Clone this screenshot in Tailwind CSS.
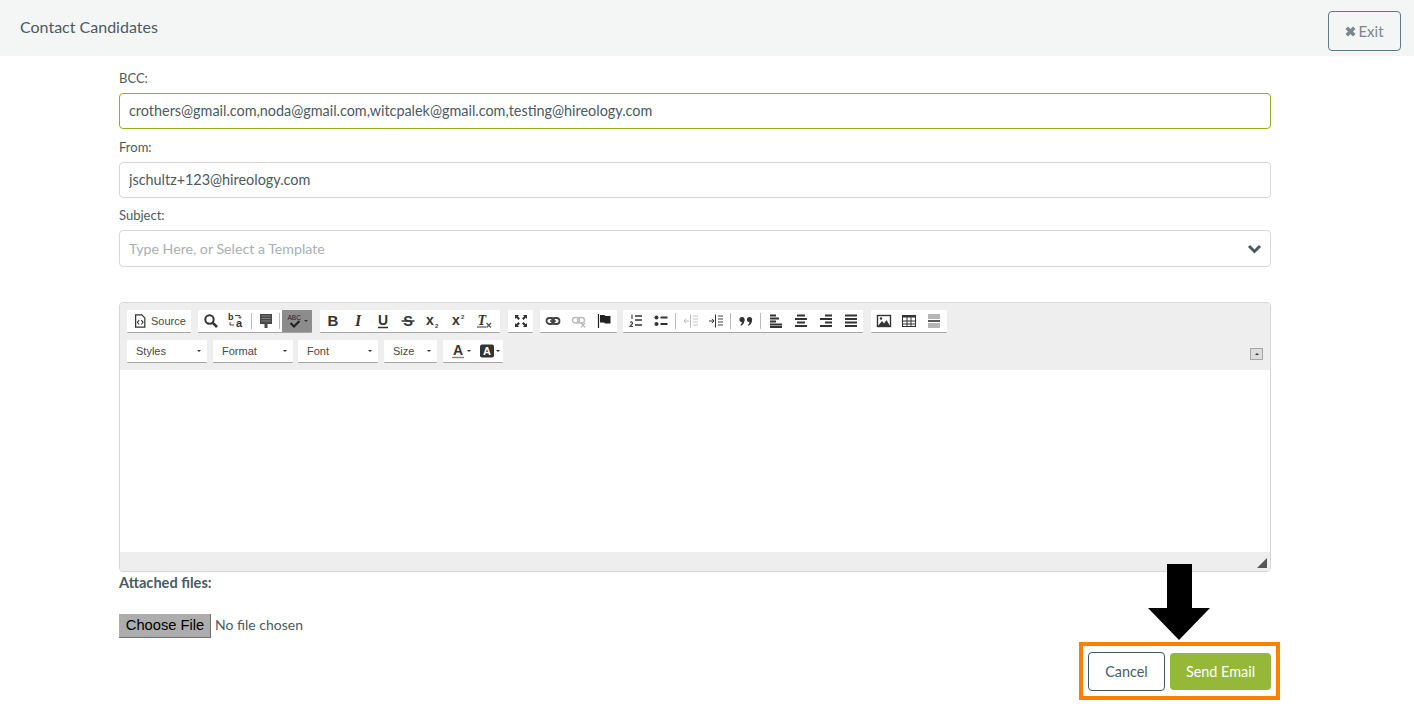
<!DOCTYPE html>
<html lang="en">
<head>
    <meta charset="UTF-8">
    <title>Contact Candidates</title>
    <script src="https://cdn.jsdelivr.net/npm/@tailwindcss/browser@4"></script>
</head>
<body class="relative h-[720px] overflow-hidden bg-white font-['Lato',sans-serif] text-[#4d5a61]">

    <!-- Header -->
    <header class="flex h-[56px] items-center justify-between bg-[#f4f6f6] pl-[20px] pr-[13px]">
        <h1 class="pb-[2px] text-[16px] font-normal">Contact Candidates</h1>
        <button class="mt-[6px] flex h-[40px] w-[73px] items-center justify-center gap-[2px] rounded-[4px] border border-[#5b7a8a] text-[15px] text-[#7c878d]">
            <svg class="h-[11px] w-[11px]" viewBox="0 0 11 11"><path d="M0.5 3L3 0.5L5.5 3L8 0.5L10.5 3L8 5.5L10.5 8L8 10.5L5.5 8L3 10.5L0.5 8L3 5.5Z" fill="#7c878d"/></svg>
            Exit
        </button>
    </header>

    <!-- Form -->
    <main class="ml-[119px] w-[1152px]">
        <label class="block pt-[14px] text-[13px] leading-[16px]">BCC:</label>
        <input class="mt-[7px] block h-[36px] w-full rounded-[4px] border border-[#8fb021] px-[9px] pb-[2px] text-[14.4px] outline-none" value="crothers@gmail.com,noda@gmail.com,witcpalek@gmail.com,testing@hireology.com">

        <label class="mt-[10px] block text-[13px] leading-[16px]">From:</label>
        <input class="mt-[7px] block h-[36px] w-full rounded-[4px] border border-[#d8d8d8] px-[9px] pb-[2px] text-[14.4px] outline-none" value="jschultz+123@hireology.com">

        <label class="mt-[9px] block text-[13px] leading-[16px]">Subject:</label>
        <div class="relative mt-[7px]">
            <input class="block h-[37px] w-full rounded-[4px] border border-[#d8d8d8] px-[9px] text-[14.2px] outline-none placeholder:text-[#a9afb2]" placeholder="Type Here, or Select a Template">
            <svg class="absolute right-[9px] top-[14px] h-[10px] w-[15px]" viewBox="0 0 15 10"><path d="M2 2L7.5 7.5L13 2" fill="none" stroke="#4d5a61" stroke-width="3"/></svg>
        </div>

        <!-- Editor -->
        <div class="mt-[35px] h-[270px] overflow-hidden rounded-[4px] border border-[#d6d6d6] font-['Liberation_Sans',sans-serif] text-[#484848]">
            <div class="relative h-[67px] bg-[#eeeeee] pl-[7px] pt-[7px]">
                <!-- row 1 -->
                <div class="flex h-[23px]">
                    <div class="flex w-[64px] items-center gap-[4px] rounded-[1px] border-b border-[#a6a6a6] bg-white pl-[6px] text-[11px]">
                        <svg class="h-[14px] w-[14px]" viewBox="0 0 16 16"><path d="M3 1H10L13.5 4.5V15H3Z" fill="none" stroke="#333" stroke-width="1.4"/><path d="M7 7L5 9.5L7 12M9.5 7L11.5 9.5L9.5 12" fill="none" stroke="#333" stroke-width="1.2"/></svg>
                        Source
                    </div>
                    <div class="ml-[7px] flex w-[114px] rounded-[1px] border-b border-[#a6a6a6] bg-white">
                        <span class="flex w-[25px] items-center justify-center">
                            <svg class="h-[16px] w-[16px]" viewBox="0 0 16 16"><circle cx="6.5" cy="6.5" r="4.2" fill="none" stroke="#333" stroke-width="2"/><path d="M9.8 9.8L14 14" stroke="#333" stroke-width="2.6"/></svg>
                        </span>
                        <span class="flex w-[25px] items-center justify-center">
                            <svg class="h-[16px] w-[16px] overflow-visible" viewBox="0 0 16 16"><text x="0" y="7" font-size="9" font-weight="700" font-family="Liberation Sans" fill="#333">b</text><text x="8" y="14" font-size="11" font-weight="700" font-family="Liberation Sans" fill="#333">a</text><path d="M7 2.5H12V5M10.5 3.8L12 5.5L13.5 3.8M6 12H2V9" fill="none" stroke="#444" stroke-width="1"/></svg>
                        </span>
                        <span class="my-[3px] ml-[3px] mr-px w-px bg-[#bcbcbc]"></span>
                        <span class="flex w-[25px] items-center justify-center">
                            <svg class="h-[16px] w-[16px]" viewBox="0 0 16 16"><path d="M2 1H14V11H9.5V15H6.5V11H2Z" fill="#484848"/><path d="M3.5 3H12.5M3.5 5.5H12.5M3.5 8H12.5" stroke="#8a8a8a" stroke-width="0.9"/></svg>
                        </span>
                        <span class="my-[3px] ml-px mr-[2px] w-px bg-[#bcbcbc]"></span>
                        <span class="flex w-[30px] items-center justify-center gap-px bg-[#8c8c8c]">
                            <svg class="h-[16px] w-[16px]" viewBox="0 0 16 16"><text x="0.5" y="6.5" font-size="6.5" font-family="Liberation Sans" fill="#222">ABC</text><path d="M3.5 10L7 13.5L12.5 8" fill="none" stroke="#222" stroke-width="2.2"/></svg>
                            <span class="border-x-[2px] border-t-[2px] border-x-transparent border-t-[#333]"></span>
                        </span>
                    </div>
                    <div class="ml-[8px] flex w-[180px] rounded-[1px] border-b border-[#a6a6a6] bg-white">
                        <span class="flex w-[25.2px] items-center justify-center">
                            <svg class="h-[16px] w-[16px]" viewBox="0 0 16 16"><text x="8" y="13" text-anchor="middle" font-size="15" font-weight="700" font-family="Liberation Sans" fill="#333">B</text></svg>
                        </span>
                        <span class="flex w-[25.2px] items-center justify-center">
                            <svg class="h-[16px] w-[16px]" viewBox="0 0 16 16"><text x="8" y="13" text-anchor="middle" font-size="16" font-weight="700" font-style="italic" font-family="Liberation Serif" fill="#333">I</text></svg>
                        </span>
                        <span class="flex w-[25.2px] items-center justify-center">
                            <svg class="h-[16px] w-[16px]" viewBox="0 0 16 16"><text x="8" y="12" text-anchor="middle" font-size="14" font-weight="700" font-family="Liberation Sans" fill="#333">U</text><path d="M3 14.5H13" stroke="#333" stroke-width="1.6"/></svg>
                        </span>
                        <span class="flex w-[25.2px] items-center justify-center">
                            <svg class="h-[16px] w-[16px]" viewBox="0 0 16 16"><text x="8" y="13" text-anchor="middle" font-size="14.5" font-weight="700" font-family="Liberation Sans" fill="#333">S</text><path d="M1.5 8H14.5" stroke="#333" stroke-width="1.3"/></svg>
                        </span>
                        <span class="flex w-[25.2px] items-center justify-center">
                            <svg class="h-[16px] w-[16px]" viewBox="0 0 16 16"><text x="1" y="12" font-size="14" font-weight="700" font-family="Liberation Sans" fill="#333">x</text><text x="10" y="14.5" font-size="6" font-weight="700" font-family="Liberation Sans" fill="#444">2</text></svg>
                        </span>
                        <span class="flex w-[25.2px] items-center justify-center">
                            <svg class="h-[16px] w-[16px]" viewBox="0 0 16 16"><text x="1" y="12" font-size="14" font-weight="700" font-family="Liberation Sans" fill="#333">x</text><text x="10" y="6" font-size="6" font-weight="700" font-family="Liberation Sans" fill="#444">2</text></svg>
                        </span>
                        <span class="flex w-[25.2px] items-center justify-center">
                            <svg class="h-[16px] w-[16px]" viewBox="0 0 16 16"><text x="1.5" y="12" font-size="14" font-weight="700" font-style="italic" font-family="Liberation Serif" fill="#333">T</text><path d="M1 14H10" stroke="#333" stroke-width="1.2"/><path d="M10.5 10L15 14.5M15 10L10.5 14.5" stroke="#555" stroke-width="1.3"/></svg>
                        </span>
                    </div>
                    <div class="ml-[8px] flex w-[25px] items-center justify-center rounded-[1px] border-b border-[#a6a6a6] bg-white">
                        <svg class="h-[16px] w-[16px]" viewBox="0 0 16 16"><path d="M2 2H6L4.8 3.2L7 5.4L5.4 7L3.2 4.8L2 6ZM14 2V6L12.8 4.8L10.6 7L9 5.4L11.2 3.2L10 2ZM2 14V10L3.2 11.2L5.4 9L7 10.6L4.8 12.8L6 14ZM14 14H10L11.2 12.8L9 10.6L10.6 9L12.8 11.2L14 10Z" fill="#333"/></svg>
                    </div>
                    <div class="ml-[7px] flex w-[77px] rounded-[1px] border-b border-[#a6a6a6] bg-white">
                        <span class="flex flex-1 items-center justify-center">
                            <svg class="h-[16px] w-[16px]" viewBox="0 0 16 16"><rect x="1.5" y="5" width="7.5" height="6" rx="3" fill="none" stroke="#444" stroke-width="1.8"/><rect x="7" y="5" width="7.5" height="6" rx="3" fill="none" stroke="#444" stroke-width="1.8"/><path d="M5 8H11" stroke="#444" stroke-width="1.5"/></svg>
                        </span>
                        <span class="flex flex-1 items-center justify-center">
                            <svg class="h-[16px] w-[16px]" viewBox="0 0 16 16"><rect x="1.5" y="4.5" width="7" height="5.5" rx="2.7" fill="none" stroke="#bbb" stroke-width="1.4"/><rect x="6.5" y="4.5" width="7" height="5.5" rx="2.7" fill="none" stroke="#bbb" stroke-width="1.4"/><path d="M10 10L14 14.5M14 10L10 14.5" stroke="#aaa" stroke-width="1.1"/></svg>
                        </span>
                        <span class="flex flex-1 items-center justify-center">
                            <svg class="h-[16px] w-[16px]" viewBox="0 0 16 16"><path d="M2.5 1V15" stroke="#222" stroke-width="1.2"/><path d="M4 2H8.5L9.5 3H14.5V10.5H9L8 9.5H4Z" fill="#222"/></svg>
                        </span>
                    </div>
                    <div class="ml-[6px] flex w-[240px] rounded-[1px] border-b border-[#a6a6a6] bg-white">
                        <span class="flex w-[25px] items-center justify-center">
                            <svg class="h-[16px] w-[16px]" viewBox="0 0 16 16"><path d="M7 3H14M7 7H14M7 12H14" stroke="#333" stroke-width="1.7"/><path d="M4 1.5V6M2 9.5Q4.5 8 4.5 10.5L2 13.5H5" fill="none" stroke="#444" stroke-width="1.2"/></svg>
                        </span>
                        <span class="flex w-[25px] items-center justify-center">
                            <svg class="h-[16px] w-[16px]" viewBox="0 0 16 16"><circle cx="3.5" cy="4.5" r="2" fill="#333"/><circle cx="3.5" cy="11" r="2" fill="#333"/><path d="M7.5 4.5H14.5M7.5 11H14.5" stroke="#333" stroke-width="2.2"/></svg>
                        </span>
                        <span class="my-[3px] ml-[2px] mr-[2px] w-px bg-[#bcbcbc]"></span>
                        <span class="flex w-[25px] items-center justify-center">
                            <svg class="h-[16px] w-[16px]" viewBox="0 0 16 16"><path d="M7.5 1.5V14.5" stroke="#bbb" stroke-width="1"/><path d="M10 3H15M10 6H15M10 9H15M10 12H15" stroke="#c4c4c4" stroke-width="1"/><path d="M1 8H6M3 5.8L1 8L3 10.2" fill="none" stroke="#bbb" stroke-width="1"/></svg>
                        </span>
                        <span class="flex w-[25px] items-center justify-center">
                            <svg class="h-[16px] w-[16px]" viewBox="0 0 16 16"><path d="M7.5 1.5V14.5" stroke="#333" stroke-width="1"/><path d="M10 3H15M10 6H15M10 9H15M10 12H15" stroke="#444" stroke-width="1"/><path d="M1 8H6M4 5.8L6 8L4 10.2" fill="none" stroke="#333" stroke-width="1"/></svg>
                        </span>
                        <span class="my-[3px] ml-[2px] mr-[2px] w-px bg-[#bcbcbc]"></span>
                        <span class="flex w-[25px] items-center justify-center">
                            <svg class="h-[16px] w-[16px]" viewBox="0 0 16 16"><circle cx="4" cy="6.5" r="2.6" fill="#333"/><path d="M6.5 6.5Q6.5 11 3 13L2.6 12Q4 10.5 4 8.5Z" fill="#333"/><circle cx="11.5" cy="6.5" r="2.6" fill="#333"/><path d="M14 6.5Q14 11 10.5 13L10.1 12Q11.5 10.5 11.5 8.5Z" fill="#333"/></svg>
                        </span>
                        <span class="my-[3px] ml-[2px] mr-[2px] w-px bg-[#bcbcbc]"></span>
                        <span class="flex w-[25px] items-center justify-center">
                            <svg class="h-[16px] w-[16px]" viewBox="0 0 16 16"><path d="M2 2.5H8M2 5.5H11M2 8.5H8M2 11.5H14M2 14H14" stroke="#333" stroke-width="2"/></svg>
                        </span>
                        <span class="flex w-[25px] items-center justify-center">
                            <svg class="h-[16px] w-[16px]" viewBox="0 0 16 16"><path d="M4 2.5H12M2 6H14M4 9.5H12M2 13H14" stroke="#333" stroke-width="2"/></svg>
                        </span>
                        <span class="flex w-[25px] items-center justify-center">
                            <svg class="h-[16px] w-[16px]" viewBox="0 0 16 16"><path d="M7 2.5H14M2 6H14M7 9.5H14M2 13H14" stroke="#333" stroke-width="2"/></svg>
                        </span>
                        <span class="flex w-[25px] items-center justify-center">
                            <svg class="h-[16px] w-[16px]" viewBox="0 0 16 16"><path d="M2 2.5H14M2 6H14M2 9.5H14M2 13H14" stroke="#333" stroke-width="2"/></svg>
                        </span>
                    </div>
                    <div class="ml-[8px] flex w-[76px] rounded-[1px] border-b border-[#a6a6a6] bg-white">
                        <span class="flex flex-1 items-center justify-center">
                            <svg class="h-[16px] w-[16px]" viewBox="0 0 16 16"><rect x="1.5" y="2.5" width="13" height="11" fill="none" stroke="#333" stroke-width="1.4"/><path d="M2 13L6 8L8 10.5L10.5 7L14 13Z" fill="#333"/><circle cx="5" cy="5.5" r="1.2" fill="#333"/></svg>
                        </span>
                        <span class="flex flex-1 items-center justify-center">
                            <svg class="h-[16px] w-[16px]" viewBox="0 0 16 16"><rect x="1.5" y="2.5" width="13" height="11" fill="none" stroke="#333" stroke-width="1"/><path d="M1.5 3.5H14.5" stroke="#333" stroke-width="2"/><path d="M1.5 8H14.5M1.5 11H14.5M6 4V13.5M10 4V13.5" stroke="#333" stroke-width="1"/></svg>
                        </span>
                        <span class="flex flex-1 items-center justify-center">
                            <svg class="h-[16px] w-[16px]" viewBox="0 0 16 16"><rect x="2" y="1" width="12" height="5" fill="#b5b5b5"/><rect x="2" y="10" width="12" height="5" fill="#b5b5b5"/><path d="M2 8H14" stroke="#222" stroke-width="1.6"/></svg>
                        </span>
                    </div>
                </div>

                <!-- row 2 -->
                <div class="mt-[7px] flex h-[23px] text-[11px]">
                    <div class="flex w-[80px] items-center justify-between rounded-[1px] border-b border-[#a6a6a6] bg-white pl-[9px] pr-[6px]">
                        Styles <span class="border-x-[2px] border-t-[2px] border-x-transparent border-t-[#333]"></span>
                    </div>
                    <div class="ml-[6px] flex w-[80px] items-center justify-between rounded-[1px] border-b border-[#a6a6a6] bg-white pl-[9px] pr-[6px]">
                        Format <span class="border-x-[2px] border-t-[2px] border-x-transparent border-t-[#333]"></span>
                    </div>
                    <div class="ml-[5px] flex w-[80px] items-center justify-between rounded-[1px] border-b border-[#a6a6a6] bg-white pl-[9px] pr-[6px]">
                        Font <span class="border-x-[2px] border-t-[2px] border-x-transparent border-t-[#333]"></span>
                    </div>
                    <div class="ml-[6px] flex w-[53px] items-center justify-between rounded-[1px] border-b border-[#a6a6a6] bg-white pl-[9px] pr-[6px]">
                        Size <span class="border-x-[2px] border-t-[2px] border-x-transparent border-t-[#333]"></span>
                    </div>
                    <div class="ml-[6px] flex w-[60px] items-center rounded-[1px] border-b border-[#a6a6a6] bg-white pl-[7px]">
                        <svg class="h-[16px] w-[16px]" viewBox="0 0 16 16"><text x="8" y="12" text-anchor="middle" font-size="14" font-weight="700" font-family="Liberation Sans" fill="#333">A</text><path d="M2 14.5H14" stroke="#888" stroke-width="1.4"/></svg>
                        <span class="ml-px border-x-[2px] border-t-[2px] border-x-transparent border-t-[#333]"></span>
                        <svg class="ml-[8px] h-[16px] w-[16px]" viewBox="0 0 16 16"><rect x="1" y="1.5" width="14" height="13" rx="2" fill="#333"/><text x="8" y="12" text-anchor="middle" font-size="11" font-weight="700" font-family="Liberation Sans" fill="#fff">A</text></svg>
                        <span class="ml-px border-x-[2px] border-t-[2px] border-x-transparent border-t-[#333]"></span>
                    </div>
                </div>

                <span class="absolute right-[7px] top-[45px] flex h-[12px] w-[13px] items-center justify-center border border-[#a6a6a6] bg-[#dddddd]">
                    <span class="border-x-[2px] border-b-[2px] border-x-transparent border-b-[#333]"></span>
                </span>
            </div>
            <div class="h-[182px] bg-white"></div>
            <div class="relative h-[19px] bg-[#eeeeee]">
                <span class="absolute bottom-[3px] right-[3px] h-0 w-0 border-b-[10px] border-l-[10px] border-b-[#555] border-l-transparent"></span>
            </div>
        </div>

        <p class="mt-[2px] text-[14.6px] font-bold leading-[17px]">Attached files:</p>
        <div class="mt-[23px] flex h-[24px] items-center">
            <button class="h-[24px] w-[92px] rounded-none border-b border-r border-[#6f6f6f] bg-[#adadad] pl-px font-['Liberation_Sans',sans-serif] text-[14.7px] text-black">Choose File</button>
            <span class="ml-[4px] pb-[4px] text-[14px]">No file chosen</span>
        </div>

        <div class="mt-[14px] flex items-center justify-end gap-[5px]">
            <button class="h-[39px] w-[77px] rounded-[4px] border border-[#3f5866] text-[14.4px]">Cancel</button>
            <button class="h-[37px] w-[101px] rounded-[4px] bg-[#95b838] text-[14.4px] text-white">Send Email</button>
        </div>
    </main>

    <!-- Annotation over the screenshot -->
    <div class="absolute left-[1079px] top-[642px] h-[58px] w-[201px] border-[4px] border-[#ff8000]"></div>
    <svg class="absolute left-[1148px] top-[564px] h-[76px] w-[62px]" viewBox="0 0 62 76"><path d="M19 0H44V44H62L31 76L0 44H19Z" fill="#000"/></svg>
</body>
</html>
